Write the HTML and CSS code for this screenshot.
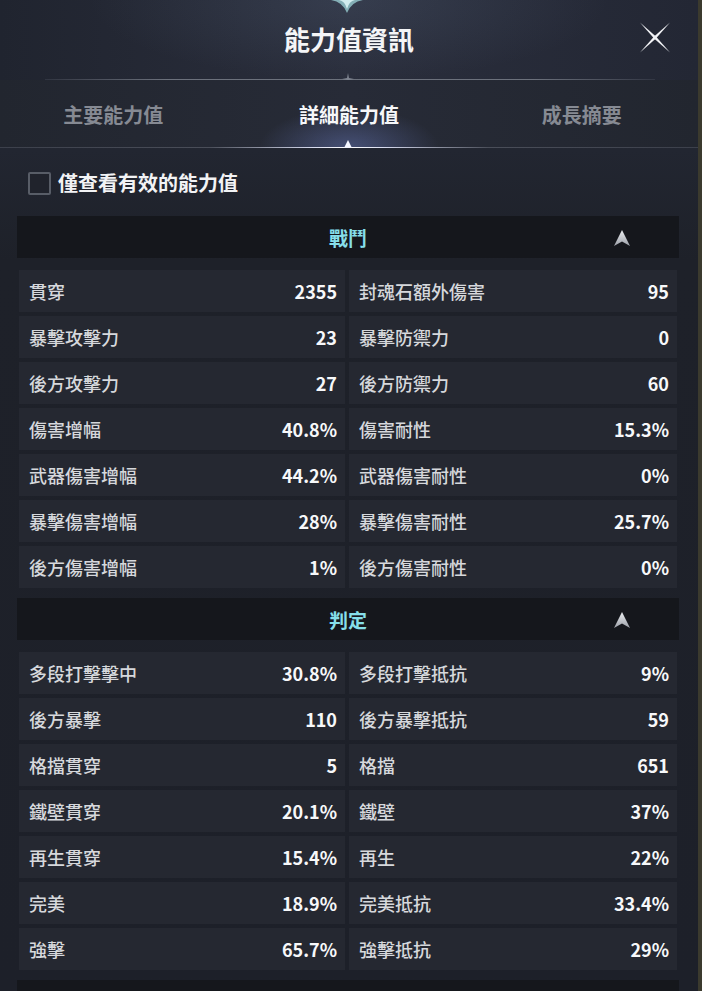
FILE: index.html
```html
<!DOCTYPE html>
<html lang="zh-Hant">
<head>
<meta charset="utf-8">
<title>能力值資訊</title>
<link rel="stylesheet" href="styles.css">
</head>
<body>
<div class="panel">
  <header class="top">
    <div class="ornament">
      <svg width="40" height="14" viewBox="0 0 40 14"><path d="M4 0 Q16 2 20 13 Q24 2 36 0 Z" fill="#9fd6da" opacity="0.75"/><path d="M12 0 Q18 1 20 9 Q22 1 28 0 Z" fill="#e6fbfc" opacity="0.8"/></svg>
    </div>
    <h1 class="title">能力值資訊</h1>
    <button class="close" aria-label="關閉">
      <svg width="30" height="31" viewBox="0 0 32 32"><polygon points="0,0 17,15 32,32 15,17" fill="#f2f3f6"/><polygon points="32,0 17,17 0,32 15,15" fill="#f2f3f6"/></svg>
    </button>
    <div class="sep">
      <svg class="sparkle" width="12" height="12" viewBox="0 0 12 12"><path d="M6 0 L7 5 L12 6 L7 7 L6 12 L5 7 L0 6 L5 5 Z" fill="#7d828e"/></svg>
    </div>
  </header>
  <nav class="tabs">
    <div class="tab">主要能力值</div>
    <div class="tab active">詳細能力值</div>
    <div class="tab">成長摘要</div>
    <div class="tabline"><span class="tri"></span></div>
  </nav>
  <label class="check">
    <span class="box"></span>
    <span class="check-text">僅查看有效的能力值</span>
  </label>
  <main class="content">
    <section class="section">
      <div class="sec-head">
        <span class="sec-title">戰鬥</span>
        <svg class="sec-arrow" width="18" height="16" viewBox="0 0 18 16"><defs><linearGradient id="ag1" x1="0" y1="0" x2="0" y2="1"><stop offset="0" stop-color="#eceef1"/><stop offset="1" stop-color="#9ca0a8"/></linearGradient></defs><path d="M9 0 L17 16 L9 11.5 L1 16 Z" fill="url(#ag1)"/></svg>
      </div>
      <div class="grid">
        <div class="cell"><span class="lbl">貫穿</span><span class="val">2355</span></div>
        <div class="cell"><span class="lbl">封魂石額外傷害</span><span class="val">95</span></div>
        <div class="cell"><span class="lbl">暴擊攻擊力</span><span class="val">23</span></div>
        <div class="cell"><span class="lbl">暴擊防禦力</span><span class="val">0</span></div>
        <div class="cell"><span class="lbl">後方攻擊力</span><span class="val">27</span></div>
        <div class="cell"><span class="lbl">後方防禦力</span><span class="val">60</span></div>
        <div class="cell"><span class="lbl">傷害增幅</span><span class="val">40.8%</span></div>
        <div class="cell"><span class="lbl">傷害耐性</span><span class="val">15.3%</span></div>
        <div class="cell"><span class="lbl">武器傷害增幅</span><span class="val">44.2%</span></div>
        <div class="cell"><span class="lbl">武器傷害耐性</span><span class="val">0%</span></div>
        <div class="cell"><span class="lbl">暴擊傷害增幅</span><span class="val">28%</span></div>
        <div class="cell"><span class="lbl">暴擊傷害耐性</span><span class="val">25.7%</span></div>
        <div class="cell"><span class="lbl">後方傷害增幅</span><span class="val">1%</span></div>
        <div class="cell"><span class="lbl">後方傷害耐性</span><span class="val">0%</span></div>
      </div>
    </section>
    <section class="section">
      <div class="sec-head">
        <span class="sec-title">判定</span>
        <svg class="sec-arrow" width="18" height="16" viewBox="0 0 18 16"><defs><linearGradient id="ag2" x1="0" y1="0" x2="0" y2="1"><stop offset="0" stop-color="#eceef1"/><stop offset="1" stop-color="#9ca0a8"/></linearGradient></defs><path d="M9 0 L17 16 L9 11.5 L1 16 Z" fill="url(#ag2)"/></svg>
      </div>
      <div class="grid">
        <div class="cell"><span class="lbl">多段打擊擊中</span><span class="val">30.8%</span></div>
        <div class="cell"><span class="lbl">多段打擊抵抗</span><span class="val">9%</span></div>
        <div class="cell"><span class="lbl">後方暴擊</span><span class="val">110</span></div>
        <div class="cell"><span class="lbl">後方暴擊抵抗</span><span class="val">59</span></div>
        <div class="cell"><span class="lbl">格擋貫穿</span><span class="val">5</span></div>
        <div class="cell"><span class="lbl">格擋</span><span class="val">651</span></div>
        <div class="cell"><span class="lbl">鐵壁貫穿</span><span class="val">20.1%</span></div>
        <div class="cell"><span class="lbl">鐵壁</span><span class="val">37%</span></div>
        <div class="cell"><span class="lbl">再生貫穿</span><span class="val">15.4%</span></div>
        <div class="cell"><span class="lbl">再生</span><span class="val">22%</span></div>
        <div class="cell"><span class="lbl">完美</span><span class="val">18.9%</span></div>
        <div class="cell"><span class="lbl">完美抵抗</span><span class="val">33.4%</span></div>
        <div class="cell"><span class="lbl">強擊</span><span class="val">65.7%</span></div>
        <div class="cell"><span class="lbl">強擊抵抗</span><span class="val">29%</span></div>
      </div>
    </section>
    <section class="section">
      <div class="sec-head"></div>
    </section>
  </main>
</div>
</body>
</html>
```
FILE: styles.css
```css
* { box-sizing: border-box; }
html, body {
  margin: 0;
  padding: 0;
  background: #1d2029;
  width: 702px;
  height: 991px;
  overflow: hidden;
}
body {
  font-family: "Noto Sans CJK TC", "Noto Sans", sans-serif;
  color: #fff;
}
.panel {
  width: 702px;
  height: 991px;
  background: linear-gradient(180deg, #262a36 0px, #222631 150px, #1e2129 260px, #1d2029 100%);
  border-right: 4px solid #3b3a2e;
  position: relative;
  overflow: hidden;
}
.top {
  height: 80px;
  position: relative;
  display: flex;
  align-items: center;
  justify-content: center;
  background: radial-gradient(ellipse 260px 80px at 50% 0%, rgba(110,130,160,0.18), rgba(0,0,0,0) 100%),
              linear-gradient(90deg, #20242f 0%, #2a2e3c 50%, #232734 100%);
}
.ornament {
  position: absolute;
  top: 0;
  left: 327px;
  width: 40px;
  height: 14px;
  line-height: 0;
}
.title {
  margin: 0;
  font-size: 26px;
  font-weight: 700;
  line-height: 1;
  color: #f4f5f7;
  margin-top: -2px;
}
.close {
  position: absolute;
  right: 28px;
  top: 22px;
  width: 30px;
  height: 31px;
  padding: 0;
  border: 0;
  background: none;
  line-height: 0;
}
.sep {
  position: absolute;
  left: 45px;
  right: 43px;
  bottom: 0;
  height: 1px;
  background: linear-gradient(90deg, rgba(110,115,128,0.2), #6c717c 20%, #6c717c 80%, rgba(110,115,128,0.2));
}
.sparkle {
  position: absolute;
  left: 297px;
  top: -6px;
}
.tabs {
  height: 68px;
  display: grid;
  grid-template-columns: 1fr 1fr 1fr;
  align-items: center;
  position: relative;
  background: radial-gradient(ellipse 90px 40px at 50% 100%, rgba(120,140,220,0.38), rgba(0,0,0,0) 100%),
              linear-gradient(90deg, #22262f 0%, #272b37 50%, #22262f 100%);
}
.tab {
  text-align: center;
  font-size: 20px;
  font-weight: 700;
  color: #868a93;
  line-height: 1;
  padding-top: 2px;
}
.tab:first-child { padding-right: 6px; }
.tab.active { color: #f6f7f9; }
.tabline {
  position: absolute;
  left: 0;
  right: 0;
  bottom: 0;
  height: 1px;
  background: linear-gradient(90deg, #3c404b 0%, #4a4e59 30%, #d8dcf0 45%, #ffffff 50%, #d8dcf0 55%, #4a4e59 70%, #3c404b 100%);
}
.tri {
  position: absolute;
  left: 344px;
  bottom: 0;
  width: 0;
  height: 0;
  border-left: 4px solid transparent;
  border-right: 4px solid transparent;
  border-bottom: 8px solid #f4f6ff;
}
.check {
  display: flex;
  align-items: flex-start;
  gap: 7px;
  padding: 24px 0 0 28px;
  height: 68px;
}
.box {
  width: 23px;
  height: 23px;
  border: 2px solid #585d67;
  border-radius: 2px;
  background: #20232c;
  flex: none;
}
.check-text {
  font-size: 20px;
  font-weight: 700;
  color: #f2f3f5;
  line-height: 23px;
  margin-top: -1px;
}
.content {
  padding: 0 19px 0 17px;
}
.section { margin-bottom: 10px; }
.sec-head {
  height: 42px;
  background: #15171c;
  display: flex;
  align-items: center;
  justify-content: center;
  position: relative;
}
.sec-title {
  font-size: 19px;
  font-weight: 700;
  color: #86dfea;
  line-height: 1;
}
.sec-arrow {
  position: absolute;
  left: 596px;
  top: 14px;
}
.grid {
  margin: 12px 2px 0 2px;
  display: grid;
  grid-template-columns: 326px 328px;
  column-gap: 4px;
  row-gap: 4px;
}
.cell {
  height: 42px;
  background: #252831;
  display: flex;
  align-items: center;
  justify-content: space-between;
  padding: 0 8px 0 10px;
}
.lbl {
  font-size: 18px;
  font-weight: 500;
  color: #d6d8dc;
  line-height: 1;
}
.val {
  font-size: 18px;
  font-weight: 700;
  color: #f7f8fa;
  line-height: 1;
}
```
